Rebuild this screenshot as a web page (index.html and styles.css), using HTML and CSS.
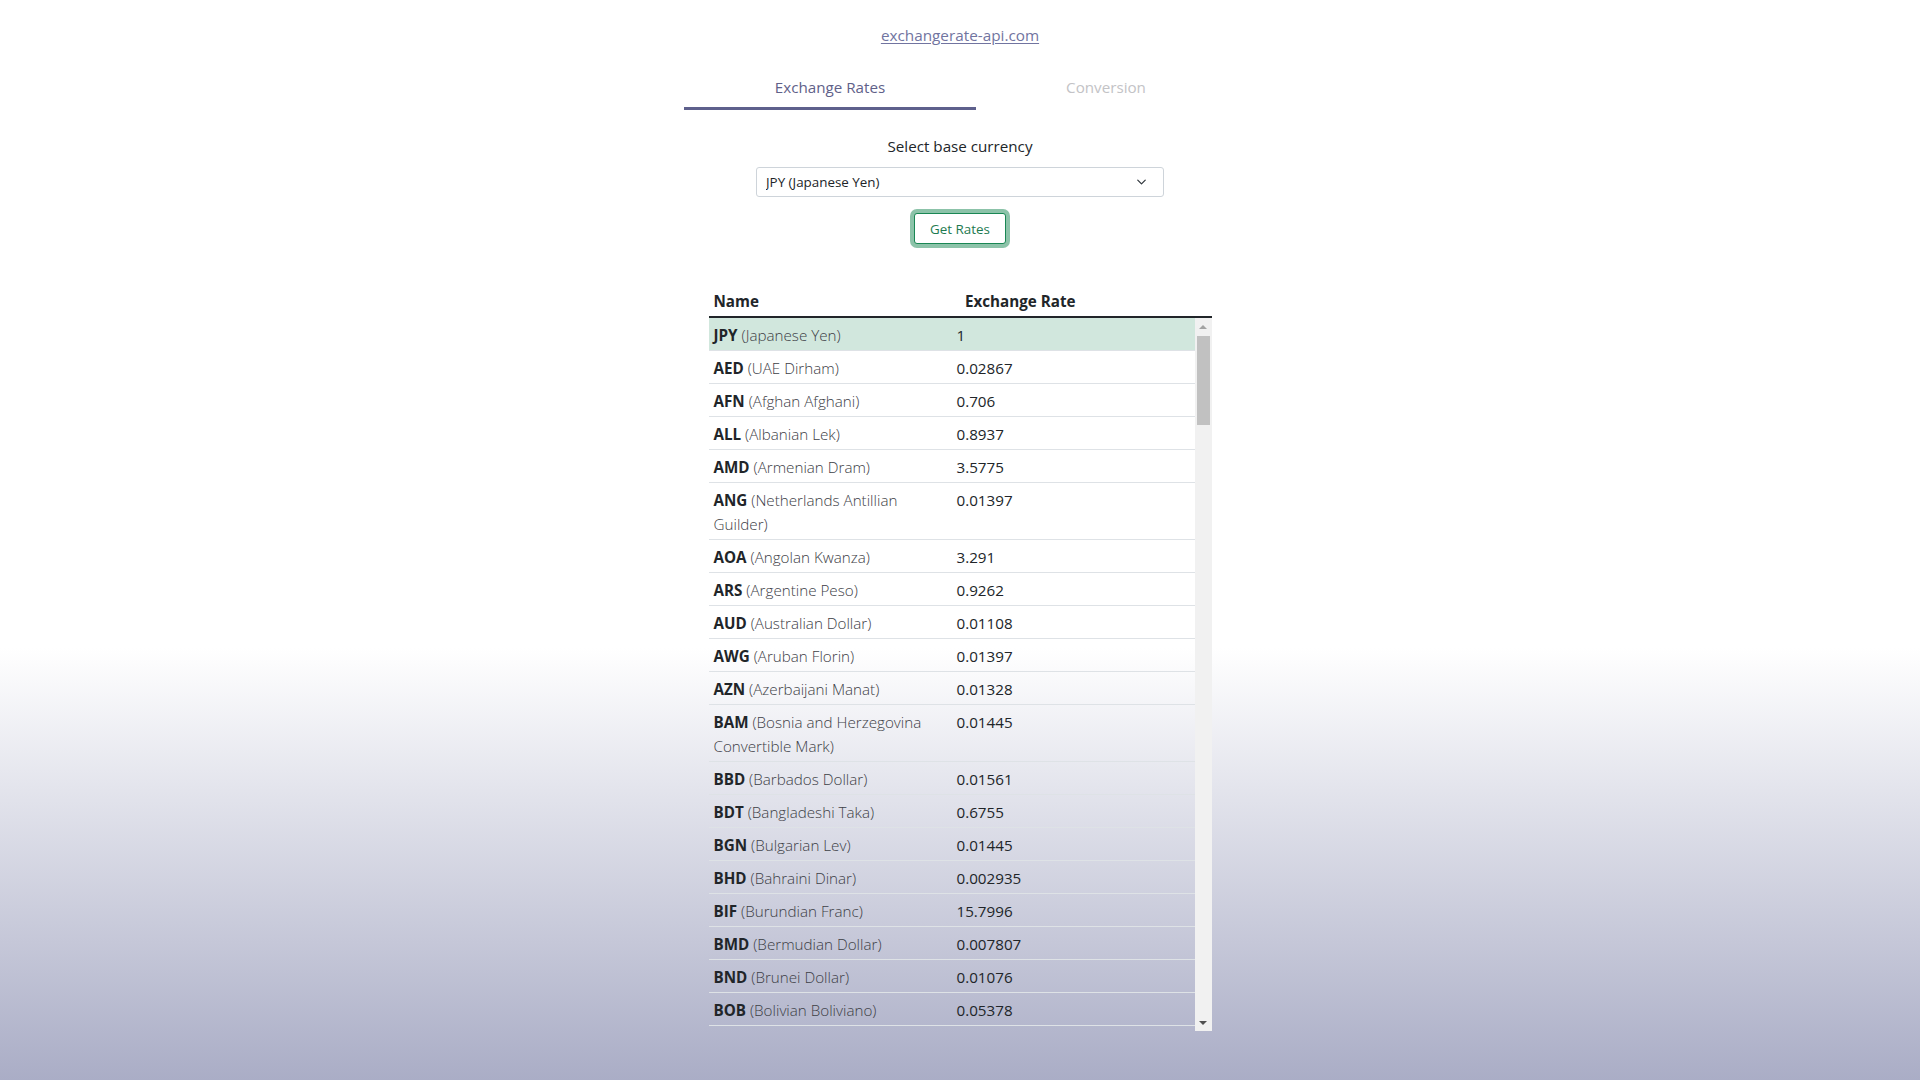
FILE: index.html
```html
<!DOCTYPE html>
<html lang="en">
<head>
<meta charset="utf-8">
<title>Exchange Rates</title>
<link rel="stylesheet" href="styles.css">
</head>
<body>
<div class="app">
  <header class="top">
    <a class="api-link" href="#">exchangerate-api.com</a>
    <nav class="tabs">
      <button class="tab active" type="button">Exchange Rates</button>
      <button class="tab" type="button">Conversion</button>
    </nav>
    <form class="base-form">
      <label class="base-label" for="base">Select base currency</label>
      <select id="base" class="base-select">
        <option>JPY (Japanese Yen)</option>
      </select>
      <button class="btn-get" type="button">Get Rates</button>
    </form>
  </header>
  <section class="rates">
    <table class="rates-head">
      <thead><tr><th>Name</th><th>Exchange Rate</th></tr></thead>
    </table>
    <div class="rates-scroll">
      <div class="rates-viewport">
        <table class="rates-body"><tbody id="rates-body"></tbody></table>
      </div>
      <div class="scrollbar" aria-hidden="true">
        <span class="sb-btn sb-up"></span>
        <span class="sb-track"><span class="sb-thumb"></span></span>
        <span class="sb-btn sb-down"></span>
      </div>
    </div>
  </section>
</div>
<script src="script.js"></script>
</body>
</html>
```
FILE: styles.css
```css
html {
  height: 100%;
}
body {
  margin: 0;
  min-height: 100%;
  background: linear-gradient(180deg, #ffffff 0%, #ffffff 60%, #aaadc6 100%);
  font-family: "Open Sans", "Noto Sans", sans-serif;
  font-size: 15.2px;
  color: #212529;
}
.app {
  width: 552px;
  margin: 0 auto;
  display: flex;
  flex-direction: column;
}
.top {
  display: flex;
  flex-direction: column;
  align-items: center;
}
.api-link {
  margin-top: 24px;
  line-height: 22px;
  font-size: 15.3px;
  color: #7174a0;
  text-decoration: underline;
  text-underline-offset: 2px;
}
.tabs {
  align-self: stretch;
  display: flex;
  margin-top: 23px;
}
.tab {
  border: 0;
  background: none;
  font: inherit;
  font-size: 15.2px;
  line-height: 22px;
  padding: 7px 0 9px;
  border-bottom: 3px solid transparent;
  color: #c3c3c6;
  cursor: pointer;
}
.tab.active {
  width: 292px;
  color: #5f6189;
  border-bottom-color: #5e608c;
}
.tab:last-child {
  flex: 1;
}
.base-form {
  display: flex;
  flex-direction: column;
  align-items: center;
}
.base-label {
  margin-top: 25px;
  line-height: 22px;
  font-size: 15.2px;
}
.base-select {
  margin-top: 10px;
  width: 408px;
  height: 30px;
  box-sizing: border-box;
  padding: 0 36px 0 9px;
  font-family: inherit;
  font-size: 13.4px;
  color: #212529;
  background-color: #fff;
  border: 1px solid #ced4da;
  border-radius: 3px;
  appearance: none;
  -webkit-appearance: none;
  background-image: url("data:image/svg+xml,%3csvg xmlns='http://www.w3.org/2000/svg' viewBox='0 0 16 16'%3e%3cpath fill='none' stroke='%23343a40' stroke-linecap='round' stroke-linejoin='round' stroke-width='2' d='m2 5 6 6 6-6'/%3e%3c/svg%3e");
  background-repeat: no-repeat;
  background-position: right 15px center;
  background-size: 13px 10px;
}
.btn-get {
  margin-top: 16px;
  width: 92px;
  height: 31px;
  box-sizing: border-box;
  font-family: inherit;
  font-size: 13.4px;
  color: #1d7a4f;
  background: #fff;
  border: 1px solid #198754;
  border-radius: 3px;
  box-shadow: 0 0 0 4px rgba(25, 135, 84, 0.5);
  padding: 0;
}
.rates {
  margin: 40px auto 0;
  width: 503px;
}
.rates-head,
.rates-body {
  width: 100%;
  border-collapse: collapse;
  table-layout: fixed;
}
.rates-head th {
  width: 50%;
  text-align: left;
  padding: 5px 5px 3px;
  line-height: 24px;
  font-weight: 700;
  font-size: 15.2px;
  border-bottom: 2px solid #212529;
}
.rates-scroll {
  display: flex;
  height: 713px;
}
.rates-viewport {
  flex: 1;
  min-width: 0;
  overflow-y: auto;
  scrollbar-width: none;
}
.rates-body td {
  width: 50%;
  padding: 5px 5px 3px;
  line-height: 24px;
  font-size: 15.2px;
  border-bottom: 1px solid #dee2e6;
  vertical-align: top;
}
.rates-body tr.base td {
  background: #d1e7dd;
}
.code {
  font-weight: 700;
}
.cname {
  font-weight: 300;
  color: #3d4046;
}
.scrollbar {
  width: 17px;
  flex: none;
  display: flex;
  flex-direction: column;
  background: #f1f1f1;
}
.sb-btn {
  height: 17px;
  flex: none;
  display: flex;
  align-items: center;
  justify-content: center;
}
.sb-up::before,
.sb-down::before {
  content: "";
  width: 0;
  height: 0;
  border-left: 4px solid transparent;
  border-right: 4px solid transparent;
}
.sb-up::before {
  border-bottom: 4px solid #a3a3a3;
}
.sb-down::before {
  border-top: 4px solid #505050;
}
.sb-track {
  flex: 1;
  padding: 1px 2px;
}
.sb-thumb {
  display: block;
  height: 89px;
  background: #c1c1c1;
}
```
FILE: script.js
```js
const RATES = [
  ["JPY", "Japanese Yen", "1"],
  ["AED", "UAE Dirham", "0.02867"],
  ["AFN", "Afghan Afghani", "0.706"],
  ["ALL", "Albanian Lek", "0.8937"],
  ["AMD", "Armenian Dram", "3.5775"],
  ["ANG", "Netherlands Antillian Guilder", "0.01397"],
  ["AOA", "Angolan Kwanza", "3.291"],
  ["ARS", "Argentine Peso", "0.9262"],
  ["AUD", "Australian Dollar", "0.01108"],
  ["AWG", "Aruban Florin", "0.01397"],
  ["AZN", "Azerbaijani Manat", "0.01328"],
  ["BAM", "Bosnia and Herzegovina Convertible Mark", "0.01445"],
  ["BBD", "Barbados Dollar", "0.01561"],
  ["BDT", "Bangladeshi Taka", "0.6755"],
  ["BGN", "Bulgarian Lev", "0.01445"],
  ["BHD", "Bahraini Dinar", "0.002935"],
  ["BIF", "Burundian Franc", "15.7996"],
  ["BMD", "Bermudian Dollar", "0.007807"],
  ["BND", "Brunei Dollar", "0.01076"],
  ["BOB", "Bolivian Boliviano", "0.05378"],
  ["BRL", "Brazilian Real", "0.03961"],
  ["BSD", "Bahamian Dollar", "0.007807"],
  ["BTN", "Bhutanese Ngultrum", "0.6023"],
  ["BWP", "Botswana Pula", "0.09371"],
  ["BYN", "Belarusian Ruble", "0.02283"],
  ["BZD", "Belize Dollar", "0.01561"],
  ["CAD", "Canadian Dollar", "0.009956"],
  ["CDF", "Congolese Franc", "15.6512"],
  ["CHF", "Swiss Franc", "0.007514"],
  ["CLP", "Chilean Peso", "6.6213"],
  ["CNY", "Chinese Renminbi", "0.05183"],
  ["COP", "Colombian Peso", "30.5841"],
  ["CRC", "Costa Rican Colon", "5.2013"],
  ["CUP", "Cuban Peso", "0.1874"],
  ["CVE", "Cape Verdean Escudo", "0.8147"],
  ["CZK", "Czech Koruna", "0.1805"],
  ["DJF", "Djiboutian Franc", "1.3875"],
  ["DKK", "Danish Krone", "0.05512"],
  ["DOP", "Dominican Peso", "0.4289"],
  ["DZD", "Algerian Dinar", "1.1263"],
  ["EGP", "Egyptian Pound", "0.1446"],
  ["ERN", "Eritrean Nakfa", "0.1171"],
  ["ETB", "Ethiopian Birr", "0.4035"],
  ["EUR", "Euro", "0.007391"],
  ["FJD", "Fiji Dollar", "0.01658"],
  ["FKP", "Falkland Islands Pound", "0.006143"],
  ["FOK", "Faroese Króna", "0.05512"],
  ["GBP", "Pound Sterling", "0.006143"],
  ["GEL", "Georgian Lari", "0.02229"],
  ["GGP", "Guernsey Pound", "0.006143"],
  ["GHS", "Ghanaian Cedi", "0.05986"],
  ["GIP", "Gibraltar Pound", "0.006143"],
  ["GMD", "Gambian Dalasi", "0.4226"],
  ["GNF", "Guinean Franc", "69.4371"],
  ["GTQ", "Guatemalan Quetzal", "0.05984"],
  ["GYD", "Guyanese Dollar", "1.6331"],
  ["HKD", "Hong Kong Dollar", "0.06127"],
  ["HNL", "Honduran Lempira", "0.1911"],
  ["HRK", "Croatian Kuna", "0.05569"],
  ["HTG", "Haitian Gourde", "0.8731"],
  ["HUF", "Hungarian Forint", "2.7812"],
  ["IDR", "Indonesian Rupiah", "114.0532"],
  ["ILS", "Israeli New Shekel", "0.02621"],
  ["IMP", "Manx Pound", "0.006143"],
  ["INR", "Indian Rupee", "0.6023"],
  ["IQD", "Iraqi Dinar", "11.3945"],
  ["IRR", "Iranian Rial", "328.8127"],
  ["ISK", "Icelandic Króna", "1.0187"],
  ["JEP", "Jersey Pound", "0.006143"],
  ["JMD", "Jamaican Dollar", "1.2067"],
  ["JOD", "Jordanian Dinar", "0.005535"],
  ["KES", "Kenyan Shilling", "0.9072"],
  ["KGS", "Kyrgyzstani Som", "0.6504"],
  ["KHR", "Cambodian Riel", "31.6412"],
  ["KID", "Kiribati Dollar", "0.01108"],
  ["KMF", "Comorian Franc", "3.6356"],
  ["KRW", "South Korean Won", "9.8542"],
  ["KWD", "Kuwaiti Dinar", "0.002394"],
  ["KYD", "Cayman Islands Dollar", "0.006506"],
  ["KZT", "Kazakhstani Tenge", "3.4368"],
  ["LAK", "Lao Kip", "102.5531"],
  ["LBP", "Lebanese Pound", "11.7691"],
  ["LKR", "Sri Lanka Rupee", "2.7864"],
  ["LRD", "Liberian Dollar", "1.1876"],
  ["LSL", "Lesotho Loti", "0.1232"],
  ["LYD", "Libyan Dinar", "0.03757"],
  ["MAD", "Moroccan Dirham", "0.07703"],
  ["MDL", "Moldovan Leu", "0.1459"],
  ["MGA", "Malagasy Ariary", "31.4418"],
  ["MKD", "Macedonian Denar", "0.4552"],
  ["MMK", "Burmese Kyat", "14.4562"],
  ["MNT", "Mongolian Tögrög", "24.1733"],
  ["MOP", "Macanese Pataca", "0.06311"],
  ["MRU", "Mauritanian Ouguiya", "0.2843"],
  ["MUR", "Mauritian Rupee", "0.3396"],
  ["MVR", "Maldivian Rufiyaa", "0.1202"],
  ["MWK", "Malawian Kwacha", "6.3712"],
  ["MXN", "Mexican Peso", "0.1578"],
  ["MYR", "Malaysian Ringgit", "0.03412"],
  ["MZN", "Mozambican Metical", "0.4988"],
  ["NAD", "Namibian Dollar", "0.1232"],
  ["NGN", "Nigerian Naira", "3.2455"],
  ["NIO", "Nicaraguan Córdoba", "0.2795"],
  ["NOK", "Norwegian Krone", "0.07381"],
  ["NPR", "Nepalese Rupee", "0.9637"],
  ["NZD", "New Zealand Dollar", "0.01219"],
  ["OMR", "Omani Rial", "0.003002"],
  ["PAB", "Panamanian Balboa", "0.007807"],
  ["PEN", "Peruvian Sol", "0.02921"],
  ["PGK", "Papua New Guinean Kina", "0.02748"],
  ["PHP", "Philippine Peso", "0.4082"],
  ["PKR", "Pakistani Rupee", "1.5316"],
  ["PLN", "Polish Złoty", "0.03464"],
  ["PYG", "Paraguayan Guaraní", "53.9184"],
  ["QAR", "Qatari Riyal", "0.02842"],
  ["RON", "Romanian Leu", "0.03652"],
  ["RSD", "Serbian Dinar", "0.8693"],
  ["RUB", "Russian Ruble", "0.5843"],
  ["RWF", "Rwandan Franc", "8.0112"],
  ["SAR", "Saudi Riyal", "0.02928"],
  ["SBD", "Solomon Islands Dollar", "0.06247"],
  ["SCR", "Seychellois Rupee", "0.1015"],
  ["SDG", "Sudanese Pound", "3.4801"],
  ["SEK", "Swedish Krona", "0.07618"],
  ["SGD", "Singapore Dollar", "0.01076"],
  ["SHP", "Saint Helena Pound", "0.006143"],
  ["SLL", "Sierra Leonean Leone", "99.0451"],
  ["SOS", "Somali Shilling", "4.5179"],
  ["SRD", "Surinamese Dollar", "0.1681"],
  ["SSP", "South Sudanese Pound", "3.3406"],
  ["STN", "São Tomé and Príncipe Dobra", "0.1811"],
  ["SYP", "Syrian Pound", "19.6217"],
  ["SZL", "Eswatini Lilangeni", "0.1232"],
  ["THB", "Thai Baht", "0.2687"],
  ["TJS", "Tajikistani Somoni", "0.09712"],
  ["TMT", "Turkmenistan Manat", "0.02733"],
  ["TND", "Tunisian Dinar", "0.02398"],
  ["TOP", "Tongan Paʻanga", "0.01796"],
  ["TRY", "Turkish Lira", "0.1206"],
  ["TTD", "Trinidad and Tobago Dollar", "0.05288"],
  ["TVD", "Tuvaluan Dollar", "0.01108"],
  ["TWD", "New Taiwan Dollar", "0.2307"],
  ["TZS", "Tanzanian Shilling", "18.1441"],
  ["UAH", "Ukrainian Hryvnia", "0.2299"],
  ["UGX", "Ugandan Shilling", "28.1256"],
  ["USD", "United States Dollar", "0.007807"],
  ["UYU", "Uruguayan Peso", "0.3184"],
  ["UZS", "Uzbekistani So'm", "87.4213"],
  ["VES", "Venezuelan Bolívar Soberano", "0.03574"],
  ["VND", "Vietnamese Đồng", "179.5612"],
  ["VUV", "Vanuatu Vatu", "0.8904"],
  ["WST", "Samoan Tālā", "0.02034"],
  ["XAF", "Central African CFA Franc", "4.8481"],
  ["XCD", "East Caribbean Dollar", "0.02108"],
  ["XDR", "Special Drawing Rights", "0.005791"],
  ["XOF", "West African CFA franc", "4.8481"],
  ["XPF", "CFP Franc", "0.8819"],
  ["YER", "Yemeni Rial", "1.9536"],
  ["ZAR", "South African Rand", "0.1232"],
  ["ZMW", "Zambian Kwacha", "0.1338"],
  ["ZWL", "Zimbabwean Dollar", "2.8122"]
];

const tbody = document.getElementById("rates-body");
RATES.forEach(([code, name, rate], i) => {
  const tr = document.createElement("tr");
  if (i === 0) tr.className = "base";
  const tdName = document.createElement("td");
  const b = document.createElement("span");
  b.className = "code";
  b.textContent = code;
  const n = document.createElement("span");
  n.className = "cname";
  n.textContent = "(" + name + ")";
  tdName.append(b, " ", n);
  const tdRate = document.createElement("td");
  tdRate.textContent = rate;
  tr.append(tdName, tdRate);
  tbody.appendChild(tr);
});
```
